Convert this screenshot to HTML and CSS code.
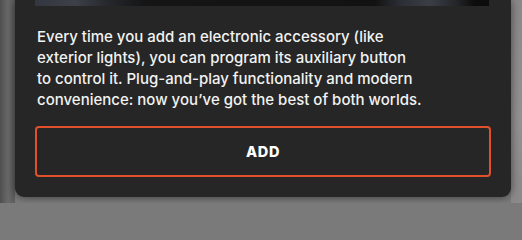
FILE: index.html
```html
<!DOCTYPE html>
<html lang="en">
<head>
<meta charset="utf-8">
<title>Accessory</title>
<link rel="stylesheet" href="styles.css">
</head>
<body>
<div class="backdrop">
  <div class="card">
    <div class="media"></div>
    <p class="desc">Every time you add an electronic accessory (like exterior lights), you can program its auxiliary button to control it. Plug-and-play functionality and modern convenience: now you’ve got the best of both worlds.</p>
    <button class="add-btn" type="button">ADD</button>
  </div>
  <div class="side"></div>
</div>
</body>
</html>
```

FILE: styles.css
```css
html {
  background: #7a7a7a;
}
html, body {
  margin: 0;
  padding: 0;
}
body {
  width: 522px;
  height: 203px;
  overflow: hidden;
}
.backdrop {
  width: 522px;
  height: 203px;
  background:
    linear-gradient(90deg, #4e4e4e 0px, #6a6a6a 8px, #5d5d5d 15px, transparent 15px),
    linear-gradient(180deg, #5b5b5b 0%, #6e6e6e 70%, #7c7c7c 100%);
  display: flex;
  align-items: flex-start;
  padding-left: 15px;
  box-sizing: border-box;
}
.card {
  flex: none;
  width: 496px;
  height: 197px;
  box-sizing: border-box;
  background: #262626;
  border-radius: 0 0 9px 9px;
  box-shadow: 0 0 10px rgba(0, 0, 0, 0.55);
  padding: 0 20px 20px;
  display: flex;
  flex-direction: column;
  font-family: "Inter", "Noto Sans", sans-serif;
  position: relative;
  z-index: 1;
}
.side {
  flex: 1;
  align-self: stretch;
  background: linear-gradient(180deg, #8a8a8a 0%, #939393 60%, #8a8a8a 100%);
}
.media {
  height: 6px;
  margin-right: 2px;
  background: linear-gradient(90deg, #33363e 0px, #3d4049 40px, #24262b 75px, #151515 110px, #121212 340px, #2b2e35 365px, #3b3e45 395px, #25272b 420px, #0c0c0c 440px, #0c0c0c 452px);
}
.desc {
  margin: 20px 0 0;
  padding-left: 2px;
  max-width: 386px;
  color: #f2f2f2;
  font-size: 15px;
  line-height: 21px;
  font-weight: 500;
}
.add-btn {
  margin-top: 16px;
  height: 51px;
  width: 100%;
  background: #262626;
  border: 2px solid #e0502b;
  border-radius: 4px;
  color: #ffffff;
  font-family: "Inter", "Noto Sans", sans-serif;
  font-weight: 800;
  font-size: 14.5px;
  letter-spacing: 0.7px;
  cursor: pointer;
}
```
